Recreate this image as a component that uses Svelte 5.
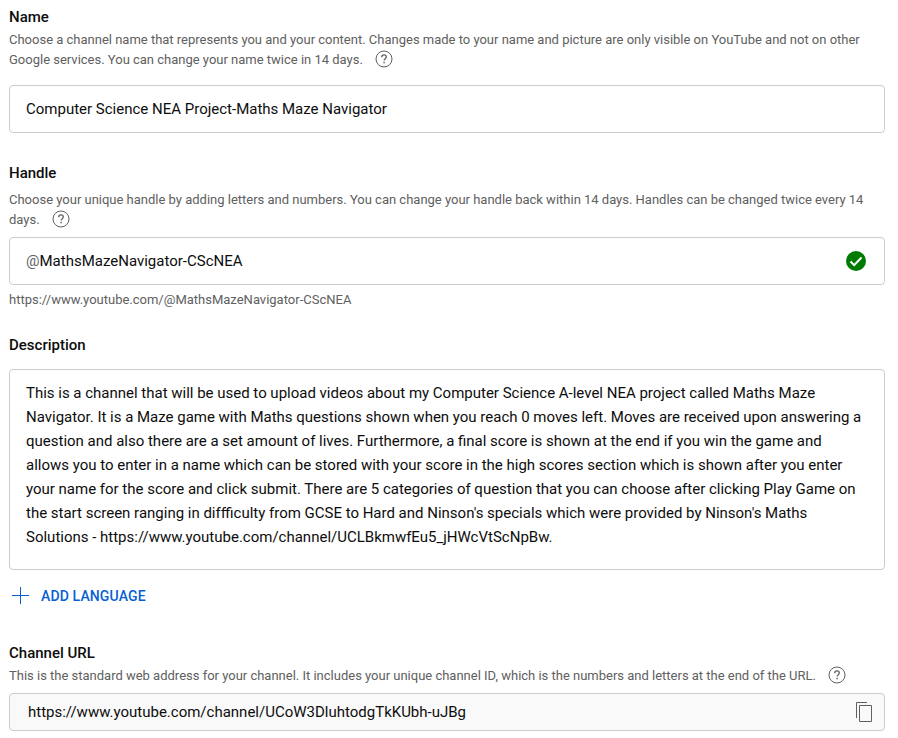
<script>
  const description = [
    'This is a channel that will be used to upload videos about my Computer Science A-level NEA project called Maths Maze',
    'Navigator. It is a Maze game with Maths questions shown when you reach 0 moves left. Moves are received upon answering a',
    'question and also there are a set amount of lives. Furthermore, a final score is shown at the end if you win the game and',
    'allows you to enter in a name which can be stored with your score in the high scores section which is shown after you enter',
    'your name for the score and click submit. There are 5 categories of question that you can choose after clicking Play Game on',
    "the start screen ranging in diffficulty from GCSE to Hard and Ninson's specials which were provided by Ninson's Maths",
    'Solutions - https://www.youtube.com/channel/UCLBkmwfEu5_jHWcVtScNpBw.'
  ];
</script>

{#snippet help()}
  <svg class="help" width="18" height="18" viewBox="0 0 18 18" fill="none" stroke="#606060">
    <circle cx="9" cy="9" r="8" stroke-width="1" />
    <path d="M6.7 7.2C6.7 5.7 7.7 4.9 9 4.9s2.3.8 2.3 2c0 1.7-2.2 1.8-2.2 3.7" stroke-width="1.3" />
    <path d="M9.1 11.8v1.4" stroke-width="1.4" />
  </svg>
{/snippet}

<main>
  <section>
    <h2>Name</h2>
    <p class="hint">Choose a channel name that represents you and your content. Changes made to your name and picture are only visible on YouTube and not on other<br />Google services. You can change your name twice in 14 days.{@render help()}</p>
    <div class="field">Computer Science NEA Project-Maths Maze Navigator</div>
  </section>

  <section class="handle">
    <h2>Handle</h2>
    <p class="hint">Choose your unique handle by adding letters and numbers. You can change your handle back within 14 days. Handles can be changed twice every 14<br />days.{@render help()}</p>
    <div class="field">
      <span><span class="at">@</span>MathsMazeNavigator-CScNEA</span>
      <svg class="check" width="20" height="20" viewBox="0 0 20 20">
        <circle cx="10" cy="10" r="10" fill="#007b00" />
        <path d="M4.5 10.5l3.7 3.6 7.3-7.6" fill="none" stroke="#fff" stroke-width="2" />
      </svg>
    </div>
    <p class="hint link">https://www.youtube.com/@MathsMazeNavigator-CScNEA</p>
  </section>

  <section class="description">
    <h2>Description</h2>
    <div class="area">
      {#each description as line}<div>{line}</div>{/each}
    </div>
    <button>
      <svg width="17" height="17" viewBox="0 0 17 17" stroke="#065fd4"><path d="M8.5 0v17M0 8.5h17" /></svg>
      ADD LANGUAGE
    </button>
  </section>

  <section class="url">
    <h2>Channel URL</h2>
    <p class="hint">This is the standard web address for your channel. It includes your unique channel ID, which is the numbers and letters at the end of the URL.{@render help()}</p>
    <div class="field">
      <span>https://www.youtube.com/channel/UCoW3DluhtodgTkKUbh-uJBg</span>
      <svg class="copy" width="16" height="20" viewBox="0 0 16 20" fill="none" stroke="#606060">
        <path d="M11 .5H.5V16M3.5 3.5h12v16h-12z" />
      </svg>
    </div>
  </section>
</main>

<style>
  :global(body) { background: #fff; }
  main {
    box-sizing: border-box;
    width: 898px;
    height: 738px;
    padding: 5px 13px 0 9px;
    overflow: hidden;
    background: #fff;
    color: #0d0d0d;
    font: 400 15px/24px Roboto, sans-serif;
    white-space: nowrap;
  }
  h2 { margin: 0; font-size: 15px; line-height: 24px; font-weight: 500; }
  .hint { margin: 1px 0 0; color: #606060; font-size: 13px; line-height: 20px; word-spacing: -0.035px; }
  .help { margin: -4px 0 0 12px; vertical-align: -4px; }
  .field {
    box-sizing: border-box;
    display: flex;
    align-items: center;
    justify-content: space-between;
    height: 48px;
    margin-top: 15px;
    padding: 0 18px 0 16px;
    border: 1px solid #ccc;
    border-radius: 4px;
  }
  .handle { margin-top: 28px; }
  .handle .hint { margin-top: 5px; }
  .handle .field { margin-top: 7px; }
  .at { color: #606060; }
  .description { margin-top: 23px; }
  .area {
    box-sizing: border-box;
    height: 201px;
    margin-top: 12px;
    padding: 11px 16px;
    border: 1px solid #ccc;
    border-radius: 4px;
    word-spacing: -0.03px;
  }
  button {
    display: flex;
    align-items: center;
    gap: 12px;
    height: 20px;
    margin: 16px 0 0;
    padding: 0 0 0 3px;
    border: 0;
    background: none;
    color: #065fd4;
    font: 500 14px/20px Roboto, sans-serif;
    letter-spacing: 0.13px;
  }
  button svg { margin-bottom: 2px; }
  .url { margin-top: 35px; }
  .url .field {
    height: 38px;
    margin-top: 7px;
    padding: 0 12px 0 18px;
    background: #f9f9f9;
  }
</style>
